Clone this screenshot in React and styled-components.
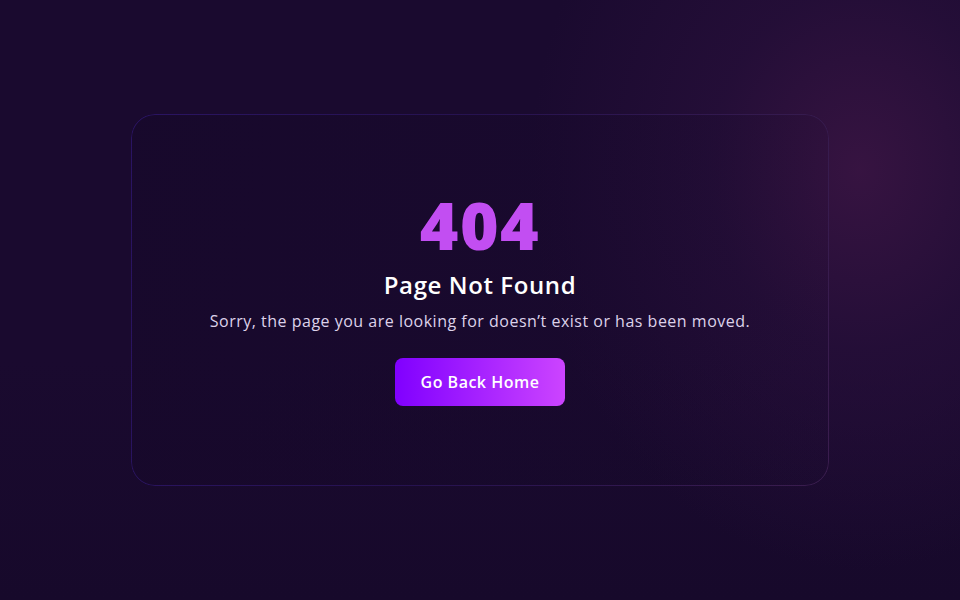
import React from "react";
import styled, { createGlobalStyle } from "styled-components";

const Global = createGlobalStyle`
  html, body { margin: 0; padding: 0; }
  body {
    background: #170a2c;
    font-family: "Open Sans", "Liberation Sans", sans-serif;
  }
`;

const Page = styled.div`
  width: 960px;
  height: 600px;
  display: flex;
  align-items: center;
  justify-content: center;
  background:
    radial-gradient(ellipse 330px 400px at 860px 170px, rgba(56, 20, 66, 0.95) 0%, rgba(44, 17, 62, 0.55) 45%, rgba(26, 10, 46, 0) 100%),
    linear-gradient(180deg, #1a0a2f 0%, #1a0a2f 60%, #17092b 100%);
  overflow: hidden;
`;

const Card = styled.div`
  position: relative;
  box-sizing: border-box;
  width: 698px;
  height: 372px;
  border-radius: 24px;
  background: linear-gradient(100deg, rgba(22, 8, 42, 0.6) 0%, rgba(22, 8, 42, 0.3) 60%, rgba(22, 8, 42, 0.05) 100%);
  display: flex;
  flex-direction: column;
  align-items: center;
  padding-top: 70px;

  &::before {
    content: "";
    position: absolute;
    inset: 0;
    border-radius: 24px;
    padding: 1px;
    background: linear-gradient(100deg, #2a1462 0%, #261250 45%, #3a1d4e 100%);
    -webkit-mask: linear-gradient(#000 0 0) content-box, linear-gradient(#000 0 0);
    -webkit-mask-composite: xor;
    mask-composite: exclude;
    pointer-events: none;
  }
`;

const Code = styled.h1`
  margin: 0;
  font-size: 66px;
  line-height: 80px;
  font-weight: 800;
  color: #c24ef2;
  letter-spacing: 1.5px;
`;

const Title = styled.h2`
  margin: 5px 0 0;
  font-size: 24px;
  line-height: 32px;
  font-weight: 600;
  color: #ffffff;
  letter-spacing: 0.6px;
`;

const Text = styled.p`
  margin: 8px 0 0;
  font-size: 16px;
  line-height: 24px;
  color: #ddd2ea;
  letter-spacing: 0.5px;
`;

const Button = styled.a`
  margin-top: 25px;
  width: 170px;
  height: 48px;
  border-radius: 8px;
  background: linear-gradient(90deg, #8000ff 0%, #cc44ff 100%);
  color: #ffffff;
  font-size: 16px;
  font-weight: 600;
  display: flex;
  align-items: center;
  justify-content: center;
  text-decoration: none;
  letter-spacing: 0.5px;
`;

export default function App() {
  return (
    <>
      <Global />
      <Page>
        <Card>
          <Code>404</Code>
          <Title>Page Not Found</Title>
          <Text>Sorry, the page you are looking for doesn’t exist or has been moved.</Text>
          <Button href="#">Go Back Home</Button>
        </Card>
      </Page>
    </>
  );
}
